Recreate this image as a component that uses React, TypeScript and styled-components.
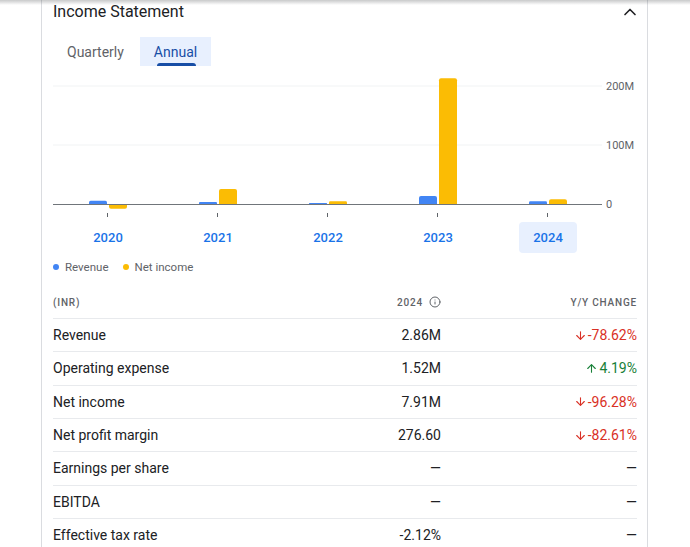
import React, { useState } from "react";
import styled, { createGlobalStyle } from "styled-components";
import { ArrowDown, ArrowUp, ChevronUp, Info } from "lucide-react";

const GlobalStyle = createGlobalStyle`
  body {
    margin: 0;
    background: #ffffff;
    font-family: Roboto, "Liberation Sans", Arial, sans-serif;
    color: #202124;
  }
`;

const COLOR = {
  text: "#202124",
  sub: "#5f6368",
  border: "#dadce0",
  divider: "#e8eaed",
  blue: "#4285f4",
  yellow: "#fbbc04",
  link: "#1a73e8",
  tabBlue: "#174ea6",
  selected: "#e8f0fe",
  red: "#d93025",
  green: "#188038",
};

const years = ["2020", "2021", "2022", "2023", "2024"];
// values in millions
const revenue = [5.6, 3.4, 1.7, 13.6, 4.6];
const netIncome = [-8, 25.4, 4.6, 213, 8.2];

const rows = [
  { label: "Revenue", value: "2.86M", change: "-78.62%", dir: "down" },
  { label: "Operating expense", value: "1.52M", change: "4.19%", dir: "up" },
  { label: "Net income", value: "7.91M", change: "-96.28%", dir: "down" },
  { label: "Net profit margin", value: "276.60", change: "-82.61%", dir: "down" },
  { label: "Earnings per share", value: "—", change: "—", dir: "none" },
  { label: "EBITDA", value: "—", change: "—", dir: "none" },
  { label: "Effective tax rate", value: "-2.12%", change: "—", dir: "none" },
];

const TopShadow = styled.div`
  position: fixed;
  top: 0;
  left: 0;
  right: 0;
  height: 5px;
  background: linear-gradient(rgba(60, 64, 67, 0.28), rgba(60, 64, 67, 0));
  pointer-events: none;
`;

const Card = styled.section`
  margin-left: 41px;
  width: 607px;
  box-sizing: border-box;
  min-height: 547px;
  padding: 0 10px 0 11px;
  border-left: 1px solid ${COLOR.border};
  border-right: 1px solid ${COLOR.border};
`;

const Header = styled.div`
  display: flex;
  align-items: center;
  justify-content: space-between;
  height: 23px;
`;

const Title = styled.h2`
  margin: 0;
  font-size: 16px;
  font-weight: 400;
  line-height: 23px;
  color: ${COLOR.text};
`;

const Collapse = styled.button`
  display: flex;
  align-items: center;
  justify-content: center;
  width: 24px;
  height: 24px;
  margin-right: -5px;
  padding: 0;
  border: none;
  background: none;
  color: ${COLOR.text};
  cursor: pointer;
`;

const Tabs = styled.div`
  display: flex;
  gap: 2px;
  margin-top: 14px;
`;

const Tab = styled.button<{ $active: boolean }>`
  position: relative;
  height: 29px;
  padding: 0 14px;
  border: none;
  border-radius: 0;
  font-family: inherit;
  font-size: 14px;
  font-weight: 400;
  color: ${(p) => (p.$active ? COLOR.tabBlue : COLOR.sub)};
  background: ${(p) => (p.$active ? COLOR.selected : "transparent")};
  cursor: pointer;

  &::after {
    content: "";
    display: ${(p) => (p.$active ? "block" : "none")};
    position: absolute;
    left: 17px;
    right: 15px;
    bottom: 0;
    height: 3px;
    border-radius: 3px 3px 0 0;
    background: ${COLOR.tabBlue};
  }
`;

const ChartSvg = styled.svg`
  display: block;
  margin-top: 4px;
`;

const YearRow = styled.div`
  display: grid;
  grid-template-columns: repeat(5, 110px);
  justify-items: center;
`;

const YearButton = styled.button<{ $active: boolean }>`
  width: 58px;
  height: 31px;
  padding: 0;
  border: none;
  border-radius: 4px;
  font-family: inherit;
  font-size: 13px;
  font-weight: 500;
  color: ${COLOR.link};
  background: ${(p) => (p.$active ? COLOR.selected : "transparent")};
  cursor: pointer;
`;

const Legend = styled.div`
  display: flex;
  align-items: center;
  gap: 14px;
  height: 16px;
  margin-top: 6px;
`;

const LegendItem = styled.div`
  display: flex;
  align-items: center;
  gap: 6px;
  font-size: 11.5px;
  font-weight: 400;
  color: ${COLOR.sub};
`;

const Dot = styled.span<{ $color: string }>`
  width: 6px;
  height: 6px;
  border-radius: 50%;
  background: ${(p) => p.$color};
`;

const Table = styled.div`
  margin-top: 11px;
`;

const Row = styled.div<{ $head?: boolean }>`
  display: grid;
  grid-template-columns: 1fr 150px 196px;
  align-items: center;
  box-sizing: border-box;
  height: ${(p) => (p.$head ? "33px" : "33.33px")};
  border-bottom: 1px solid ${COLOR.divider};
`;

const HeadCell = styled.div<{ $right?: boolean }>`
  display: flex;
  align-items: center;
  justify-content: ${(p) => (p.$right ? "flex-end" : "flex-start")};
  gap: 6px;
  font-size: 10px;
  font-weight: 500;
  letter-spacing: 0.8px;
  text-transform: uppercase;
  color: ${COLOR.sub};
`;

const Label = styled.div`
  font-size: 14px;
  font-weight: 400;
  color: ${COLOR.text};
`;

const Value = styled.div`
  text-align: right;
  font-size: 14px;
  font-weight: 400;
  color: ${COLOR.text};
`;

const Change = styled.div<{ $dir: string }>`
  display: flex;
  align-items: center;
  justify-content: flex-end;
  gap: 1px;
  font-size: 14px;
  font-weight: 400;
  color: ${(p) =>
    p.$dir === "down" ? COLOR.red : p.$dir === "up" ? COLOR.green : COLOR.text};
`;

const BASE = 134;
const SCALE = 0.59;

const barPath = (x: number, w: number, v: number) => {
  const h = Math.abs(v * SCALE);
  const r = Math.min(2, h / 2, w / 2);
  const end = v >= 0 ? BASE - h : BASE + h;
  const s = v >= 0 ? 1 : -1;
  return `M${x} ${BASE} V${end + s * r} Q${x} ${end} ${x + r} ${end} H${
    x + w - r
  } Q${x + w} ${end} ${x + w} ${end + s * r} V${BASE} Z`;
};

const Chart = () => (
  <ChartSvg width={584} height={152}>
    {[16, 75].map((y) => (
      <line key={y} x1={0} x2={549} y1={y} y2={y} stroke="#f1f3f4" />
    ))}
    {years.map((year, i) => {
      const c = 55 + i * 110;
      return (
        <g key={year}>
          <path d={barPath(c - 19, 18, revenue[i])} fill={COLOR.blue} />
          <path d={barPath(c + 1, 18, netIncome[i])} fill={COLOR.yellow} />
          <line
            x1={c - 0.5}
            x2={c - 0.5}
            y1={143}
            y2={147}
            stroke="#5f6368"
          />
        </g>
      );
    })}
    <line x1={0} x2={549} y1={BASE + 0.5} y2={BASE + 0.5} stroke="#70757a" />
    {[
      { y: 16, t: "200M" },
      { y: 75, t: "100M" },
      { y: BASE, t: "0" },
    ].map((l) => (
      <text
        key={l.t}
        x={553}
        y={l.y + 4}
        fontSize={11}
        fill={COLOR.sub}
        fontFamily="Roboto, sans-serif"
      >
        {l.t}
      </text>
    ))}
  </ChartSvg>
);

const App = () => {
  const [tab, setTab] = useState("Annual");
  const [year, setYear] = useState("2024");

  return (
    <>
      <GlobalStyle />
      <TopShadow />
      <Card>
        <Header>
          <Title>Income Statement</Title>
          <Collapse aria-label="Collapse">
            <ChevronUp size={20} strokeWidth={2} />
          </Collapse>
        </Header>
        <Tabs>
          {["Quarterly", "Annual"].map((t) => (
            <Tab key={t} $active={tab === t} onClick={() => setTab(t)}>
              {t}
            </Tab>
          ))}
        </Tabs>
        <Chart />
        <YearRow>
          {years.map((y) => (
            <YearButton key={y} $active={year === y} onClick={() => setYear(y)}>
              {y}
            </YearButton>
          ))}
        </YearRow>
        <Legend>
          <LegendItem>
            <Dot $color={COLOR.blue} />
            Revenue
          </LegendItem>
          <LegendItem>
            <Dot $color={COLOR.yellow} />
            Net income
          </LegendItem>
        </Legend>
        <Table>
          <Row $head>
            <HeadCell>(INR)</HeadCell>
            <HeadCell $right>
              {year}
              <Info size={12} strokeWidth={2} />
            </HeadCell>
            <HeadCell $right>Y/Y change</HeadCell>
          </Row>
          {rows.map((r) => (
            <Row key={r.label}>
              <Label>{r.label}</Label>
              <Value>{r.value}</Value>
              <Change $dir={r.dir}>
                {r.dir === "down" && <ArrowDown size={13} strokeWidth={2} />}
                {r.dir === "up" && <ArrowUp size={13} strokeWidth={2} />}
                {r.change}
              </Change>
            </Row>
          ))}
        </Table>
      </Card>
    </>
  );
};

export default App;
